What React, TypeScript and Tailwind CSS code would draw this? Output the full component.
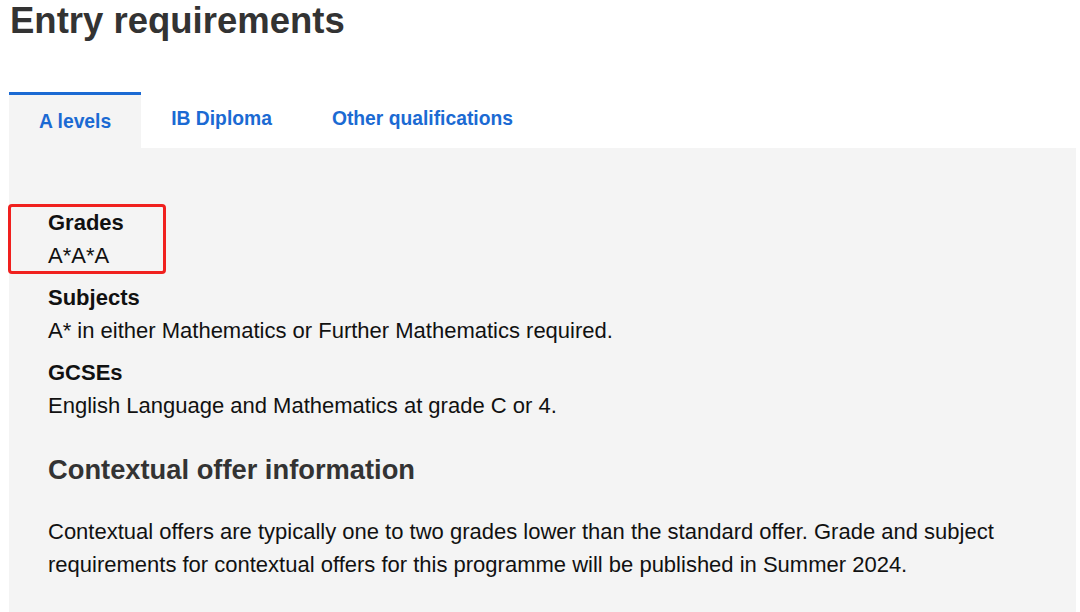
import React from "react";

const tabs = ["A levels", "IB Diploma", "Other qualifications"];

const items = [
  { label: "Grades", value: "A*A*A" },
  { label: "Subjects", value: "A* in either Mathematics or Further Mathematics required." },
  { label: "GCSEs", value: "English Language and Mathematics at grade C or 4." },
];

export default function App() {
  const active = 0;
  return (
    <div
      className="relative w-[1080px] h-[612px] overflow-hidden bg-white"
      style={{ fontFamily: '"Liberation Sans", Arial, sans-serif' }}
    >
      <h1 className="pl-[10px] text-[36.5px] leading-[42px] font-bold text-[#333333]">
        Entry requirements
      </h1>

      <div className="mt-[50px] ml-[9px] w-[1067px]">
        {/* Tabs */}
        <div className="flex h-[56px]">
          {tabs.map((t, i) =>
            i === active ? (
              <div
                key={t}
                className="px-[30px] pt-[13px] border-t-[3px] border-[#1b6ad3] bg-[#f4f4f4] text-[19.3px] leading-[28px] font-bold text-[#1b6ad3]"
              >
                {t}
              </div>
            ) : (
              <div
                key={t}
                className="px-[30px] pt-[13px] text-[19.3px] leading-[28px] font-bold text-[#1b6ad3]"
              >
                {t}
              </div>
            )
          )}
        </div>

        {/* Panel */}
        <div className="bg-[#f4f4f4] h-[520px] pl-[39px] pr-[48px] pt-[58px]">
          <div className="flex flex-col gap-[9px]">
            {items.map((it) => (
              <div key={it.label} className="text-[22px] leading-[33px] text-[#111111]">
                <div className="font-bold">{it.label}</div>
                <div>{it.value}</div>
              </div>
            ))}
          </div>

          <h2 className="mt-[30px] text-[27.3px] leading-[36px] font-bold text-[#333333]">
            Contextual offer information
          </h2>

          <p className="mt-[27px] text-[22px] leading-[33px] text-[#111111]">
            Contextual offers are typically one to two grades lower than the standard offer. Grade and subject
            requirements for contextual offers for this programme will be published in Summer 2024.
          </p>
        </div>
      </div>

      {/* highlight annotation */}
      <div className="absolute left-[8px] top-[204px] w-[158px] h-[70px] border-[3px] border-[#f0201e] rounded-[4px]" />
    </div>
  );
}
